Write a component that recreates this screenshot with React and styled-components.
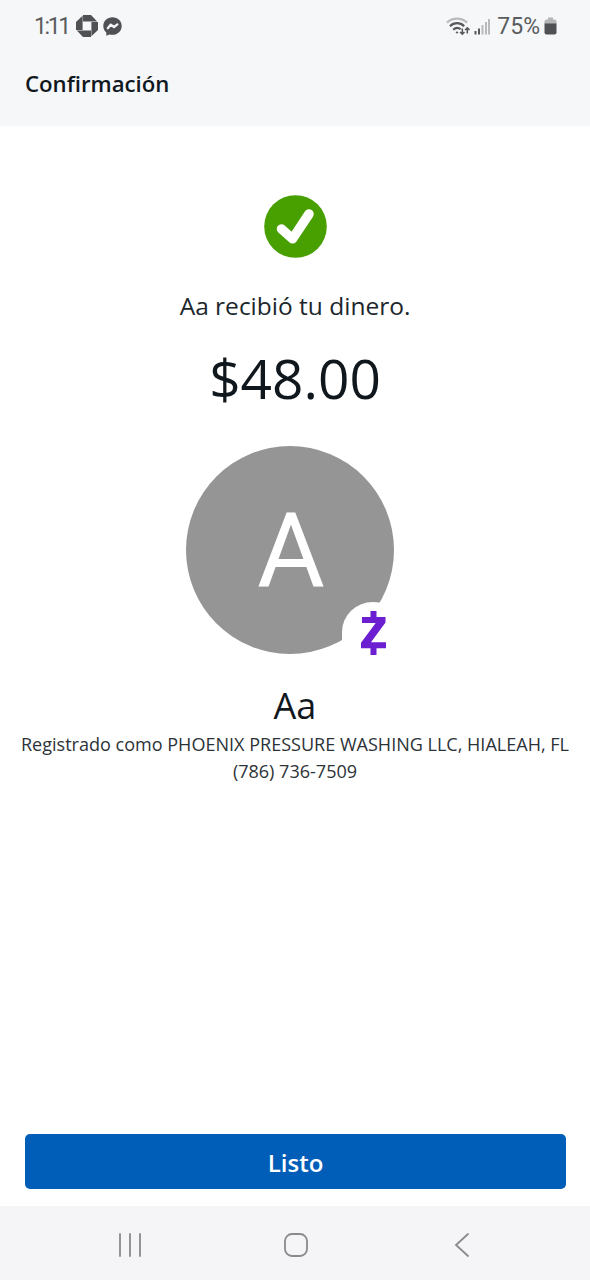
import React from "react";
import styled, { createGlobalStyle } from "styled-components";

const GlobalStyle = createGlobalStyle`
  * {
    box-sizing: border-box;
  }
  body {
    margin: 0;
    background: #ffffff;
    font-family: "Open Sans", "Noto Sans", sans-serif;
    color: #10181e;
  }
`;

const Screen = styled.div`
  display: flex;
  flex-direction: column;
  width: 590px;
  height: 1280px;
`;

const Top = styled.header`
  height: 126px;
  background: #f5f7f9;
`;

const StatusBar = styled.div`
  display: flex;
  justify-content: space-between;
  height: 52px;
  padding: 0 33px 0 34px;
  font-family: Roboto, sans-serif;
  color: #5b5c5e;
`;

const StatusGroup = styled.div`
  display: flex;
  align-items: center;
`;

const StatusText = styled.span`
  margin-left: ${({ $gap }) => $gap || 0}px;
  padding-top: 2px;
  font-size: ${({ $size }) => $size}px;
  letter-spacing: ${({ $spacing }) => $spacing}px;
  line-height: 50px;
`;

const StatusIcon = styled.svg`
  display: block;
  margin-left: ${({ $gap }) => $gap}px;
`;

const Title = styled.h1`
  margin: 0;
  padding-left: 25px;
  font-size: 22.2px;
  font-weight: 600;
  line-height: 64px;
`;

const Content = styled.main`
  flex: 1;
  display: flex;
  flex-direction: column;
  align-items: center;
  padding-top: 69px;
`;

const CheckIcon = styled.svg`
  display: block;
`;

const Message = styled.p`
  margin: 31px 0 0;
  font-size: 24.5px;
  line-height: 34px;
  color: #20272c;
`;

const Amount = styled.p`
  margin: 17px 0 0;
  font-size: 55px;
  line-height: 76px;
`;

const AvatarBox = styled.div`
  position: relative;
  width: 218px;
  height: 209px;
  margin-top: 30px;
`;

const Avatar = styled.div`
  display: flex;
  align-items: center;
  justify-content: center;
  width: 208px;
  height: 208px;
  padding: 2px 0 0 2px;
  border-radius: 50%;
  background: #959595;
  color: #ffffff;
  font-family: Roboto, sans-serif;
  font-size: 104px;
  line-height: 1;
`;

const Badge = styled.svg`
  position: absolute;
  left: 156px;
  top: 156px;
`;

const Name = styled.h2`
  margin: 26px 0 0;
  font-size: 36px;
  font-weight: 400;
  line-height: 50px;
`;

const Detail = styled.p`
  margin: 0;
  font-size: 18.04px;
  line-height: 27px;
  color: #2c3338;
  white-space: nowrap;
`;

const Footer = styled.div`
  padding: 0 24px 17px 25px;
`;

const Button = styled.button`
  display: block;
  width: 100%;
  height: 55px;
  padding: 2px 0 0;
  border: none;
  border-radius: 5px;
  background: #005eb8;
  color: #ffffff;
  font-family: inherit;
  font-size: 24px;
  font-weight: 600;
  line-height: 53px;
`;

const NavBar = styled.nav`
  display: grid;
  grid-template-columns: repeat(3, 166px);
  justify-content: center;
  justify-items: center;
  align-items: center;
  height: 74px;
  padding: 4px 0 0 1px;
  background: #f5f5f8;
`;

const NavIcon = styled.svg`
  display: block;
  fill: none;
  stroke: #8a8a8d;
  stroke-width: 1.8;
  stroke-linecap: round;
`;

function ChaseIcon() {
  return (
    <StatusIcon $gap={7} width="22" height="22" viewBox="0 0 22 22" fill="#505154">
      <path d="M7 0h8l6.200 6.600H7z" />
      <path d="M22 7v8l-6.600 6.200V7z" />
      <path d="M15 22H7L.8 15.400H15z" />
      <path d="M0 15V7L6.600.8V15z" />
    </StatusIcon>
  );
}

function MessengerIcon() {
  return (
    <StatusIcon $gap={5} width="19" height="19" viewBox="0 0 19 19">
      <path
        d="M9.5.3C4.3.3.3 4 .3 9c0 2.700 1.200 4.900 3 6.400v2.800c0 .4.400.6.7.4l2.200-1.200c1 .3 2.100.4 3.300.4 5.200 0 9.200-3.800 9.200-8.800S14.700.3 9.500.3z"
        fill="#505154"
      />
      <path
        d="M4.800 11.200l3-3.600 3.200 2.400 3.400-2.600"
        fill="none"
        stroke="#f5f7f9"
        strokeWidth="2.300"
        strokeLinejoin="round"
        strokeLinecap="round"
      />
    </StatusIcon>
  );
}

function WifiIcon() {
  return (
    <StatusIcon width="25" height="19" viewBox="0 0 25 19" fill="none" strokeWidth="2.200">
      <path d="M1 5.600C6.500.2 15.500.2 21 5.600" stroke="#b9babc" />
      <path d="M4 9.200c4-4 10.200-4 14.200 0" stroke="#58595b" />
      <path d="M7.200 12.700c2.300-2.200 5.200-2.200 7.400-.5" stroke="#58595b" />
      <circle cx="11" cy="15.500" r=".7" fill="#58595b" stroke="#58595b" strokeWidth="1" />
      <path
        d="M16.300 11.500V17m-2.200-2l2.200 2.200 2.200-2.200M21.300 16.500V11m-2.200 2l2.200-2.200 2.200 2.200"
        stroke="#58595b"
        strokeWidth="1.600"
      />
    </StatusIcon>
  );
}

function SignalIcon() {
  return (
    <StatusIcon $gap={3} width="17" height="17" viewBox="0 0 17 17">
      <path d="M.5 13h2v3.500h-2zM4 10.500h2v6H4z" fill="#58595b" />
      <path d="M7.500 7h2v9.500h-2zM11 4h2v12.500h-2zM14 1h2v15.500h-2z" fill="#b9babc" />
    </StatusIcon>
  );
}

function BatteryIcon() {
  return (
    <StatusIcon $gap={4} width="13" height="18" viewBox="0 0 13 18">
      <path d="M4 .5h5v2h1.500a2 2 0 0 1 2 2V7H.5V4.500a2 2 0 0 1 2-2H4z" fill="#b4b5b7" />
      <path d="M.5 6.500h12v9a2 2 0 0 1-2 2h-8a2 2 0 0 1-2-2z" fill="#505154" />
    </StatusIcon>
  );
}

function ZelleBadge() {
  return (
    <Badge width="62" height="62" viewBox="0 0 62 62">
      <path d="M0 38.500V30a31 30 0 0 1 62 0v32H0z" fill="#ffffff" />
      <path
        d="M28.500 9h6v6h9v5.500L29 40.300H44v6h-9.500V53h-6v-6.700H19v-5.500L33.700 21H20v-6h8.500z"
        fill="#6b1fd0"
      />
    </Badge>
  );
}

function App() {
  return (
    <Screen>
      <GlobalStyle />
      <Top>
        <StatusBar>
          <StatusGroup>
            <StatusText $size={23} $spacing={-2.4}>1:11</StatusText>
            <ChaseIcon />
            <MessengerIcon />
          </StatusGroup>
          <StatusGroup>
            <WifiIcon />
            <SignalIcon />
            <StatusText $gap={6} $size={23} $spacing={0}>75%</StatusText>
            <BatteryIcon />
          </StatusGroup>
        </StatusBar>
        <Title>Confirmación</Title>
      </Top>
      <Content>
        <CheckIcon width="63" height="63" viewBox="0 0 63 63">
          <circle cx="31.500" cy="31.500" r="31.300" fill="#489f00" />
          <path
            d="M17.500 34L28.500 43.800 45 19"
            fill="none"
            stroke="#ffffff"
            strokeWidth="9.500"
            strokeLinecap="round"
            strokeLinejoin="round"
          />
        </CheckIcon>
        <Message>Aa recibió tu dinero.</Message>
        <Amount>$48.00</Amount>
        <AvatarBox>
          <Avatar>A</Avatar>
          <ZelleBadge />
        </AvatarBox>
        <Name>Aa</Name>
        <Detail>Registrado como PHOENIX PRESSURE WASHING LLC, HIALEAH, FL</Detail>
        <Detail>(786) 736-7509</Detail>
      </Content>
      <Footer>
        <Button>Listo</Button>
      </Footer>
      <NavBar>
        <NavIcon width="24" height="26" viewBox="0 0 24 26">
          <path d="M2 2v22M12 2v22M22 2v22" />
        </NavIcon>
        <NavIcon width="26" height="26" viewBox="0 0 26 26">
          <rect x="2" y="2" width="22" height="22" rx="7" />
        </NavIcon>
        <NavIcon width="16" height="26" viewBox="0 0 16 26">
          <path d="M14 2L2 13l12 11" />
        </NavIcon>
      </NavBar>
    </Screen>
  );
}

export default App;
